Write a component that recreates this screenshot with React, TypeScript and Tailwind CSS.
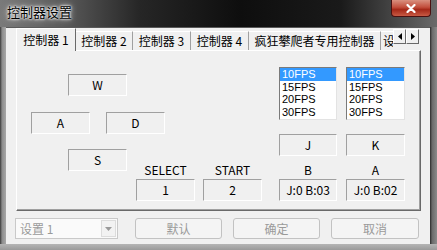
import React from "react";

const FONT = "font-['Noto_Sans_CJK_SC','Noto_Sans',sans-serif]";

/* sunken static text box */
function Sunken({ children, w = "w-[59px]" }: { children: React.ReactNode; w?: string }) {
  return (
    <div
      className={`${w} h-[22px] flex items-center justify-center border border-t-[#a0a0a0] border-l-[#a0a0a0] border-r-white border-b-white text-[12px] leading-none text-black`}
    >
      {children}
    </div>
  );
}

function Label({ children }: { children: React.ReactNode }) {
  return (
    <div className="h-[14px] mb-[2px] flex items-center justify-center text-[12px] leading-none text-black">
      {children}
    </div>
  );
}

function FpsList() {
  const items = ["10FPS", "15FPS", "20FPS", "30FPS"];
  return (
    <div className="h-[53px] bg-white border border-t-[#7a7a7a] border-l-[#7a7a7a] border-r-[#e3e3e3] border-b-[#e3e3e3] font-['Liberation_Sans',Arial,sans-serif]">
      {items.map((it, i) => (
        <div
          key={it}
          className={`h-[12.5px] pl-[2px] text-[11px] leading-[12.5px] ${
            i === 0 ? "bg-[#3399ff] text-white" : "text-black"
          }`}
        >
          {it}
        </div>
      ))}
    </div>
  );
}

function Tab({ label, w, active }: { label: string; w: string; active?: boolean }) {
  if (active) {
    return (
      <div
        className={`${w} h-[23px] -mb-[1px] relative z-10 bg-[#f0f0f0] border-t border-l border-r border-t-white border-l-white border-r-[#696969] flex items-center justify-center text-[12px] text-black pb-[1px]`}
      >
        {label}
      </div>
    );
  }
  return (
    <div
      className={`${w} h-[19px] shrink-0 border-t border-r border-t-white border-r-[#a0a0a0] flex items-center justify-center text-[12px] text-black whitespace-nowrap overflow-hidden`}
    >
      {label}
    </div>
  );
}

function Btn({ label, w }: { label: string; w: string }) {
  return (
    <div
      className={`${w} h-[21px] rounded-[3px] border border-[#c2c2c2] bg-[#f4f4f4] flex items-center justify-center text-[12px] text-[#9a9a9a]`}
    >
      {label}
    </div>
  );
}

export default function App() {
  return (
    <div className={`w-[437px] h-[250px] relative overflow-hidden flex flex-col bg-[#8a8a8a] ${FONT}`}>
      {/* title bar */}
      <div className="h-[27px] shrink-0 bg-[linear-gradient(90deg,#7a7a7a_0%,#5c5c5c_14%,#262626_32%,#0e0e0e_55%,#1a1a1a_78%,#6a6a6a_100%)] flex items-start pl-[7px] pt-[3px]">
        <span className="text-[13px] leading-[18px] text-black [text-shadow:0_0_6px_#fff,0_0_3px_#fff,0_0_2px_#fff]">
          控制器设置
        </span>
      </div>

      {/* close button */}
      <div className="absolute right-[6px] top-0 w-[40px] h-[17px] rounded-b-[4px] border border-t-0 border-[#4a1010] bg-[linear-gradient(180deg,#d9907f_0%,#c24e3c_45%,#a52818_60%,#c85a44_100%)] flex items-center justify-center">
        <svg width="10" height="9" viewBox="0 0 10 9">
          <path d="M1.5 1 L8.5 8 M8.5 1 L1.5 8" stroke="#fff" strokeWidth="2.2" strokeLinecap="round" />
        </svg>
      </div>

      {/* body */}
      <div className="flex flex-1">
        <div className="w-[6px] shrink-0 bg-[linear-gradient(90deg,#3a3a3a_0%,#8d8d8d_35%,#a8a8a8_100%)]" />
        <div className="w-[424px] h-[217px] bg-[#f0f0f0] border-t border-[#5a5a5a] flex flex-col">
          {/* tab strip */}
          <div className="h-[22px] pl-[10px] flex items-end">
            <Tab label="控制器 1" w="w-[60px]" active />
            <Tab label="控制器 2" w="w-[57px]" />
            <Tab label="控制器 3" w="w-[58px]" />
            <Tab label="控制器 4" w="w-[58px]" />
            <Tab label="疯狂攀爬者专用控制器" w="w-[132px]" />
            <div className="w-[12px] h-[19px] overflow-hidden border-t border-t-white text-[12px] text-black pl-[2px] flex items-center whitespace-nowrap">
              设
            </div>
            <div className="self-start mt-[1px] flex">
              <div className="w-[13px] h-[15px] bg-[#f0f0f0] border border-t-white border-l-white border-r-[#696969] border-b-[#696969] flex items-center justify-center">
                <svg width="4" height="7" viewBox="0 0 4 7">
                  <path d="M4 0 L0 3.5 L4 7 Z" fill="#000" />
                </svg>
              </div>
              <div className="w-[13px] h-[15px] bg-[#f0f0f0] border border-t-white border-l-white border-r-[#696969] border-b-[#696969] flex items-center justify-center">
                <svg width="4" height="7" viewBox="0 0 4 7">
                  <path d="M0 0 L4 3.5 L0 7 Z" fill="#000" />
                </svg>
              </div>
            </div>
          </div>

          {/* panel */}
          <div className="ml-[10px] w-[405px] h-[161px] border border-t-white border-l-white border-r-[#696969] border-b-[#696969] shadow-[inset_-1px_-1px_0_#a0a0a0] flex pl-[14px]">
            {/* left: keys */}
            <div className="w-[231px] flex flex-col pt-[23px]">
              <div className="ml-[37px]">
                <Sunken>W</Sunken>
              </div>
              <div className="mt-[16px] flex gap-[16px]">
                <Sunken>A</Sunken>
                <Sunken>D</Sunken>
              </div>
              <div className="mt-[15px] flex items-start">
                <div className="ml-[37px]">
                  <Sunken>S</Sunken>
                </div>
                <div className="ml-[9px] pt-[14px] w-[59px]">
                  <Label>SELECT</Label>
                  <Sunken>1</Sunken>
                </div>
                <div className="ml-[8px] pt-[14px] w-[59px]">
                  <Label>START</Label>
                  <Sunken>2</Sunken>
                </div>
              </div>
            </div>

            {/* right: turbo lists */}
            <div className="ml-[17px] flex gap-[9px] pt-[16px]">
              <div className="w-[58px] flex flex-col">
                <FpsList />
                <div className="mt-[14px]">
                  <Sunken w="w-[58px]">J</Sunken>
                </div>
                <div className="mt-[7px]">
                  <Label>B</Label>
                  <Sunken w="w-[58px]">J:0 B:03</Sunken>
                </div>
              </div>
              <div className="w-[59px] flex flex-col">
                <FpsList />
                <div className="mt-[14px]">
                  <Sunken>K</Sunken>
                </div>
                <div className="mt-[7px]">
                  <Label>A</Label>
                  <Sunken>J:0 B:02</Sunken>
                </div>
              </div>
            </div>
          </div>

          {/* bottom row */}
          <div className="mt-[7px] pl-[9px] flex items-center">
            <div className="w-[103px] h-[21px] border border-[#c9c9c9] bg-[#fafafa] flex items-center">
              <span className="flex-1 pl-[4px] text-[12px] text-[#9a9a9a]">设置 1</span>
              <div className="w-[15px] h-[17px] mr-[1px] border border-[#dcdcdc] bg-[#f2f2f2] flex items-center justify-center">
                <svg width="7" height="4" viewBox="0 0 7 4">
                  <path d="M0 0 L7 0 L3.5 4 Z" fill="#9a9a9a" />
                </svg>
              </div>
            </div>
            <div className="ml-[17px] flex gap-[11px]">
              <Btn label="默认" w="w-[87px]" />
              <Btn label="确定" w="w-[87px]" />
              <Btn label="取消" w="w-[88px]" />
            </div>
          </div>
        </div>
        <div className="w-[7px] shrink-0 bg-[linear-gradient(90deg,#2a2a2a_0%,#6a6a6a_30%,#8a8a8a_100%)]" />
      </div>
      <div className="h-[6px] shrink-0 bg-[linear-gradient(180deg,#b5b5b5_0%,#9a9a9a_100%)]" />
    </div>
  );
}
